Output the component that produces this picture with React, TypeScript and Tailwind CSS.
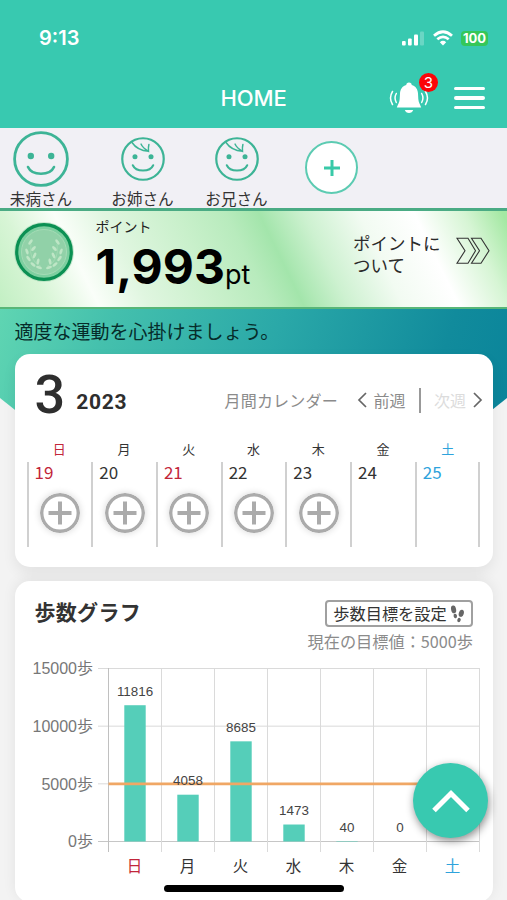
import React from "react";

const sans = "font-['Noto_Sans_CJK_JP','Noto_Sans',sans-serif]";

const members = [
  { name: "未病さん", main: true },
  { name: "お姉さん", main: false },
  { name: "お兄さん", main: false },
];

const week = [
  { label: "日", date: 19, color: "text-[#c2263a]", dateColor: "text-[#c2263a]", add: true, steps: 11816 },
  { label: "月", date: 20, color: "text-[#333]", dateColor: "text-[#333]", add: true, steps: 4058 },
  { label: "火", date: 21, color: "text-[#333]", dateColor: "text-[#c2263a]", add: true, steps: 8685 },
  { label: "水", date: 22, color: "text-[#333]", dateColor: "text-[#333]", add: true, steps: 1473 },
  { label: "木", date: 23, color: "text-[#333]", dateColor: "text-[#333]", add: true, steps: 40 },
  { label: "金", date: 24, color: "text-[#333]", dateColor: "text-[#333]", add: false, steps: 0 },
  { label: "土", date: 25, color: "text-[#2ea3dc]", dateColor: "text-[#2ea3dc]", add: false, steps: null },
];

const Face: React.FC<{ size: number; hair?: boolean }> = ({ size, hair }) => (
  <svg width={size} height={size} viewBox="0 0 56 56" fill="none" stroke="#3db496" strokeLinecap="round">
    <circle cx="28" cy="28" r="26.4" strokeWidth="2.8" />
    <circle cx="17.8" cy="25" r="3.2" fill="#3db496" stroke="none" />
    <circle cx="38.2" cy="25" r="3.2" fill="#3db496" stroke="none" />
    <path d="M15 36C19 45 37 45 41 36" strokeWidth="2.6" />
    {hair && <path d="M14 7C18 13 25 17.5 35 18.2M25.5 9C27 12.5 30 15.5 35 18.2C34.8 15 34.8 12 35.5 9.5" strokeWidth="1.9" />}
  </svg>
);

const Bell: React.FC = () => (
  <svg width="40" height="34" viewBox="0 0 40 34" fill="none">
    <path
      d="M20 1.5C18.3 1.5 17.2 2.6 17.3 4C13.2 5 11.2 8.5 11 12.5L10.7 18C10.5 21 9 23.5 7.8 26.5H32.2C31 23.5 29.5 21 29.3 18L29 12.5C28.8 8.5 26.8 5 22.7 4C22.8 2.6 21.7 1.5 20 1.5Z"
      fill="white"
    />
    <path d="M15.8 29H24.2C23.6 31 22 32 20 32S16.4 31 15.8 29Z" fill="white" />
    <path
      d="M7.3 12.5Q4.8 17 7.3 21.5M3.5 10.5Q-.5 17 3.5 23.5M32.7 12.5Q35.2 17 32.7 21.5M36.5 10.5Q40.5 17 36.5 23.5"
      stroke="white"
      strokeWidth="1.5"
      strokeLinecap="round"
    />
  </svg>
);

const leaves = [
  [-5, 15.5, -70],
  [-11, 12.5, -50],
  [-15.5, 6.5, -35],
  [-17, -0.5, -20],
  [-13.5, -10, 35],
  [-6, 9.5, 10],
  [-9.5, 3.5, 25],
  [-10.5, -3.5, 40],
];

const Coin: React.FC = () => (
  <svg width="62" height="62" viewBox="-31 -31 62 62">
    <circle r="30" fill="#a9dbb8" opacity="0.6" />
    <circle r="27.3" fill="#7ecfa0" stroke="#0b9053" strokeWidth="3.2" />
    <circle r="22.5" fill="#91d1a8" stroke="#a5dcb6" strokeWidth="1" />
    {[1, -1].map((side) => (
      <g key={side} transform={`scale(${side} 1)`} fill="#bfe6c6">
        <path d="M-3 14.5Q-16 8 -13 -8" fill="none" stroke="#a9dcb6" strokeWidth="0.7" />
        {leaves.map(([x, y, r], i) => (
          <ellipse key={i} rx="1.4" ry="3.1" transform={`translate(${x} ${y}) rotate(${r})`} />
        ))}
      </g>
    ))}
  </svg>
);

const AddCircle: React.FC = () => (
  <svg className="rounded-full shadow-[0_0_7px_rgba(0,0,0,0.16)]" width="40" height="40" viewBox="0 0 40 40" fill="white" stroke="#ababab">
    <circle cx="20" cy="20" r="18.3" strokeWidth="3.4" />
    <path d="M20 8.5V31.5M8.5 20H31.5" strokeWidth="4" />
  </svg>
);

const Footsteps: React.FC = () => (
  <svg width="15" height="18" viewBox="0 0 15 18" fill="#666">
    <ellipse cx="3.6" cy="4.4" rx="2.5" ry="3.9" transform="rotate(-12 3.6 4.4)" />
    <ellipse cx="5.3" cy="11" rx="1.7" ry="2.2" transform="rotate(-15 5.3 11)" />
    <ellipse cx="11.3" cy="8.3" rx="2.5" ry="3.7" transform="rotate(15 11.3 8.3)" />
    <ellipse cx="9" cy="15" rx="1.7" ry="2.2" transform="rotate(20 9 15)" />
  </svg>
);

const StepChart: React.FC = () => {
  const left = 93.5;
  const step = 53;
  const base = 183.5;
  const y = (v: number) => base - (v / 15000) * 173;

  return (
    <svg className="block font-['Liberation_Sans','Noto_Sans_CJK_JP',sans-serif]" width="478" height="226" viewBox="0 0 478 226">
      <g strokeWidth="1" stroke="#dadada">
        {[0, 5000, 10000, 15000].map((v) => (
          <path key={v} d={`M83 ${y(v)}H465`} stroke={v === 0 ? "#c6c6c6" : "#dadada"} />
        ))}
        {[0, 1, 2, 3, 4, 5, 6, 7].map((i) => (
          <path key={i} d={`M${left + i * step} 10V194`} stroke={i === 0 ? "#c0c0c0" : "#dadada"} />
        ))}
      </g>
      {[0, 5000, 10000, 15000].map((v) => (
        <text key={v} x="78" y={y(v) + 5.7} textAnchor="end" fontSize="16" fill="#777">
          {v}歩
        </text>
      ))}
      {week.map((d, i) => (
        <rect key={d.label} x={left + (i + 0.5) * step - 10.7} y={y(d.steps ?? 0)} width="21.4" height={base - y(d.steps ?? 0)} fill="#55ceb9" />
      ))}
      <path d={`M${left} ${y(5000)}H465`} stroke="#f0a765" strokeWidth="2.7" />
      {week.map((d, i) => (
        <g key={d.label} textAnchor="middle">
          {d.steps !== null && (
            <text x={left + (i + 0.5) * step} y={y(d.steps) - 9.3} fontSize="13.4" fill="#444">
              {d.steps}
            </text>
          )}
          <text x={left + (i + 0.5) * step - 0.5} y="213.5" fontSize="15.5" className={d.color} fill="currentColor">
            {d.label}
          </text>
        </g>
      ))}
    </svg>
  );
};

const Header: React.FC = () => (
  <header className="h-[128px] bg-[#38c9b0] text-white font-['Inter',sans-serif]">
    {/* Status bar */}
    <div className="flex h-[76px] items-center justify-between pl-[39px] pr-[19px]">
      <span className="text-[20px] font-semibold">9:13</span>
      <div className="flex items-center gap-2">
        <svg width="24" height="16" viewBox="0 0 24 16" fill="white">
          <rect x="1" y="11" width="3.7" height="4.5" rx="1" />
          <rect x="7" y="8.5" width="3.7" height="7" rx="1" />
          <rect x="13" y="4.5" width="4" height="11" rx="1" />
          <rect x="19" y="1.5" width="4" height="14" rx="1" opacity="0.25" />
        </svg>
        <svg width="20" height="16" viewBox="0 0 20 16" fill="none" stroke="white">
          <path d="M1 5.8Q10 -2.2 19 5.8" strokeWidth="2.8" />
          <path d="M4.3 9.3Q10 4.3 15.7 9.3" strokeWidth="2.7" />
          <path d="M10 15.5L6.8 12.2Q10 9.5 13.2 12.2Z" fill="white" stroke="none" />
        </svg>
        <span className="flex h-[15px] w-[27px] items-center justify-center rounded-[4px] bg-[#35c759] text-[13px] font-bold leading-none">
          100
        </span>
      </div>
    </div>
    {/* Title row */}
    <div className="grid h-11 grid-cols-[1fr_auto_1fr] items-center">
      <h1 className="col-start-2 text-[22px] font-medium tracking-[-0.1px]">HOME</h1>
      <div className="flex items-center justify-end gap-[25px] pr-[22px]">
        <div className="relative">
          <Bell />
          <span className="absolute -top-[8px] left-[30px] flex size-[19px] items-center justify-center rounded-full bg-[#fb0508] text-[15px] leading-none">
            3
          </span>
        </div>
        <div className="flex w-[31px] flex-col gap-[6px]">
          <span className="h-[3.5px] rounded-sm bg-white" />
          <span className="h-[3.5px] rounded-sm bg-white" />
          <span className="h-[3.5px] rounded-sm bg-white" />
        </div>
      </div>
    </div>
  </header>
);

const App: React.FC = () => {
  return (
    <div className={`h-[900px] w-[507px] overflow-hidden bg-[#f3f3f3] text-[#333] ${sans}`}>
      <Header />

      {/* Family members */}
      <section className="flex h-[80px] bg-[#f1f0f5]">
        {members.map((m) => (
          <div key={m.name} className="flex w-[94px] flex-col items-center first:w-[82px] nth-2:ml-[13.5px]">
            <div className="flex h-[61px] items-center">
              <Face size={m.main ? 56 : 44} hair={!m.main} />
            </div>
            <span className="text-[15.6px] leading-[18px] text-[#333]">{m.name}</span>
          </div>
        ))}
        <button className="ml-[21.5px] mt-[13px] flex size-[53px] items-center justify-center rounded-full border-2 border-[#5ccbb2] bg-white">
          <svg width="18" height="18" viewBox="0 0 18 18" stroke="#38c9a8" strokeWidth="3">
            <path d="M9 1V17M1 9H17" />
          </svg>
        </button>
      </section>

      {/* Points */}
      <section className="flex h-[101px] border-t-[3px] border-b-2 border-t-[#4aab84] border-b-[#58b678] bg-[linear-gradient(64deg,#c2efc3_0%,#d8f5d6_9%,#fafef9_18%,#e0f6e0_27%,#c9f0cb_40%,#b8ebbd_49%,#a3e5ab_55%,#cdf1d0_63%,#f2fbf2_73%,#fff_83%,#d6f5d4_92%,#a4e8a3_99%)]">
        <div className="ml-[12.5px] mt-[10px]">
          <Coin />
        </div>
        <div className="ml-[21px] w-[257.5px] pt-[5px] text-black">
          <p className="text-[14px] leading-[20px] text-[#222]">ポイント</p>
          <p className="mt-[7px] font-['Inter',sans-serif] text-[48px] leading-[48px] whitespace-nowrap">
            <span className="font-bold">1,993</span>
            <span className="text-[27px]">pt</span>
          </p>
        </div>
        <p className="mt-[21px] w-[103px] text-[17.5px] leading-[22px] text-[#2b2b2b]">
          ポイントに
          <br />
          ついて
        </p>
        <svg className="mt-[26px]" width="35" height="28" viewBox="0 0 35 28" fill="none" stroke="#333" strokeWidth="1.1">
          <path d="M1 1.3H12L19.5 13.8L12 26.2H1L9 13.8Z" />
          <path d="M15.5 1.3H25L33 13.8L25 26.2H15.5L23.5 13.8Z" />
        </svg>
      </section>

      <main className="grid grid-cols-1">
        <div className="col-start-1 row-start-1 h-[210px] bg-[linear-gradient(107deg,#5fd5b2_0%,#44c0ad_20%,#2aa8a8_50%,#118b9c_80%,#07829a_100%)] [clip-path:polygon(0_0,100%_0,100%_89px,70%_210px,30%_210px,0_89px)]" />
        <div className="z-10 col-start-1 row-start-1 flex flex-col px-[14.5px]">
          <p className="h-[45px] text-[19px] leading-[44px] text-[#062c2a]">適度な運動を心掛けましょう。</p>

          {/* Weekly calendar */}
          <section className="h-[213px] rounded-[15px] bg-white shadow-[0_6px_14px_rgba(0,0,0,0.07)]">
            <div className="flex h-[82px] items-center">
              <div className="flex w-[210px] items-baseline pl-[20px] font-['Roboto',sans-serif] text-[#2e2e2e]">
                <span className="text-[54px] font-medium leading-[82px]">3</span>
                <span className="ml-[11px] mt-[18px] self-center pb-[3px] text-[21px] font-bold leading-none tracking-[0.7px]">2023</span>
              </div>
              <div className="flex items-center pt-[10px] text-[16px] text-[#8b8b8b]">
                <span className="w-[132px] tracking-[0.2px]">月間カレンダー</span>
                <svg width="10" height="16" viewBox="0 0 10 16" fill="none" stroke="#666" strokeWidth="1.7">
                  <path d="M9 1L2 8L9 15" />
                </svg>
                <span className="ml-[7px]">前週</span>
                <span className="ml-[13px] h-[25px] w-[2px] bg-[#999]" />
                <span className="ml-[13.5px] text-[#dcdcdc]">次週</span>
                <svg className="ml-[7px]" width="10" height="16" viewBox="0 0 10 16" fill="none" stroke="#666" strokeWidth="1.7">
                  <path d="M1 1L8 8L1 15" />
                </svg>
              </div>
            </div>
            <div className="ml-[12px] mr-[13px] grid grid-cols-7">
              {week.map((d) => (
                <div key={d.label}>
                  <p className={`h-[26px] pl-px text-center text-[13px] leading-[25px] ${d.color}`}>{d.label}</p>
                  <div className="h-[85px] border-l-2 border-[#d0d0d0] [div:last-child>&]:border-r-2">
                    <p className={`pl-[6px] text-[17px] leading-[19px] ${d.dateColor}`}>{d.date}</p>
                    {d.add && (
                      <div className="mt-[12px] flex justify-center">
                        <AddCircle />
                      </div>
                    )}
                  </div>
                </div>
              ))}
            </div>
          </section>

          {/* Step graph */}
          <section className="mt-[14px] h-[321px] rounded-[15px] bg-white shadow-[0_-2px_14px_rgba(0,0,0,0.07)]">
            <div className="flex h-[77px] justify-between pl-[20px] pr-[19.5px] pt-[19px]">
              <h2 className="text-[21px] font-bold leading-[23px] tracking-[0.3px] text-[#333]">歩数グラフ</h2>
              <div className="flex flex-col items-end">
                <button className="flex h-[27px] w-[148px] items-center justify-center gap-[3px] rounded-[4px] border-2 border-[#a0a0a0] text-[16.2px] leading-none whitespace-nowrap">
                  歩数目標を設定
                  <Footsteps />
                </button>
                <p className="mt-[2px] text-[16.2px] leading-[24px] whitespace-nowrap text-[#8b8b8b]">現在の目標値：5000歩</p>
              </div>
            </div>
            <StepChart />
          </section>
        </div>
      </main>

      {/* Scroll to top */}
      <button className="fixed z-20 left-[413px] top-[763px] flex size-[75px] items-center justify-center rounded-full bg-[#38c9b0] shadow-[1px_3px_8px_rgba(0,0,0,0.45)]">
        <svg width="40" height="26" viewBox="0 0 40 26" fill="none" stroke="white" strokeWidth="5">
          <path d="M3 22.5L20 5.5L37 22.5" />
        </svg>
      </button>
      <div className="fixed z-20 left-[164px] top-[885px] h-[7px] w-[180px] rounded-full bg-black" />
    </div>
  );
};

export default App;
